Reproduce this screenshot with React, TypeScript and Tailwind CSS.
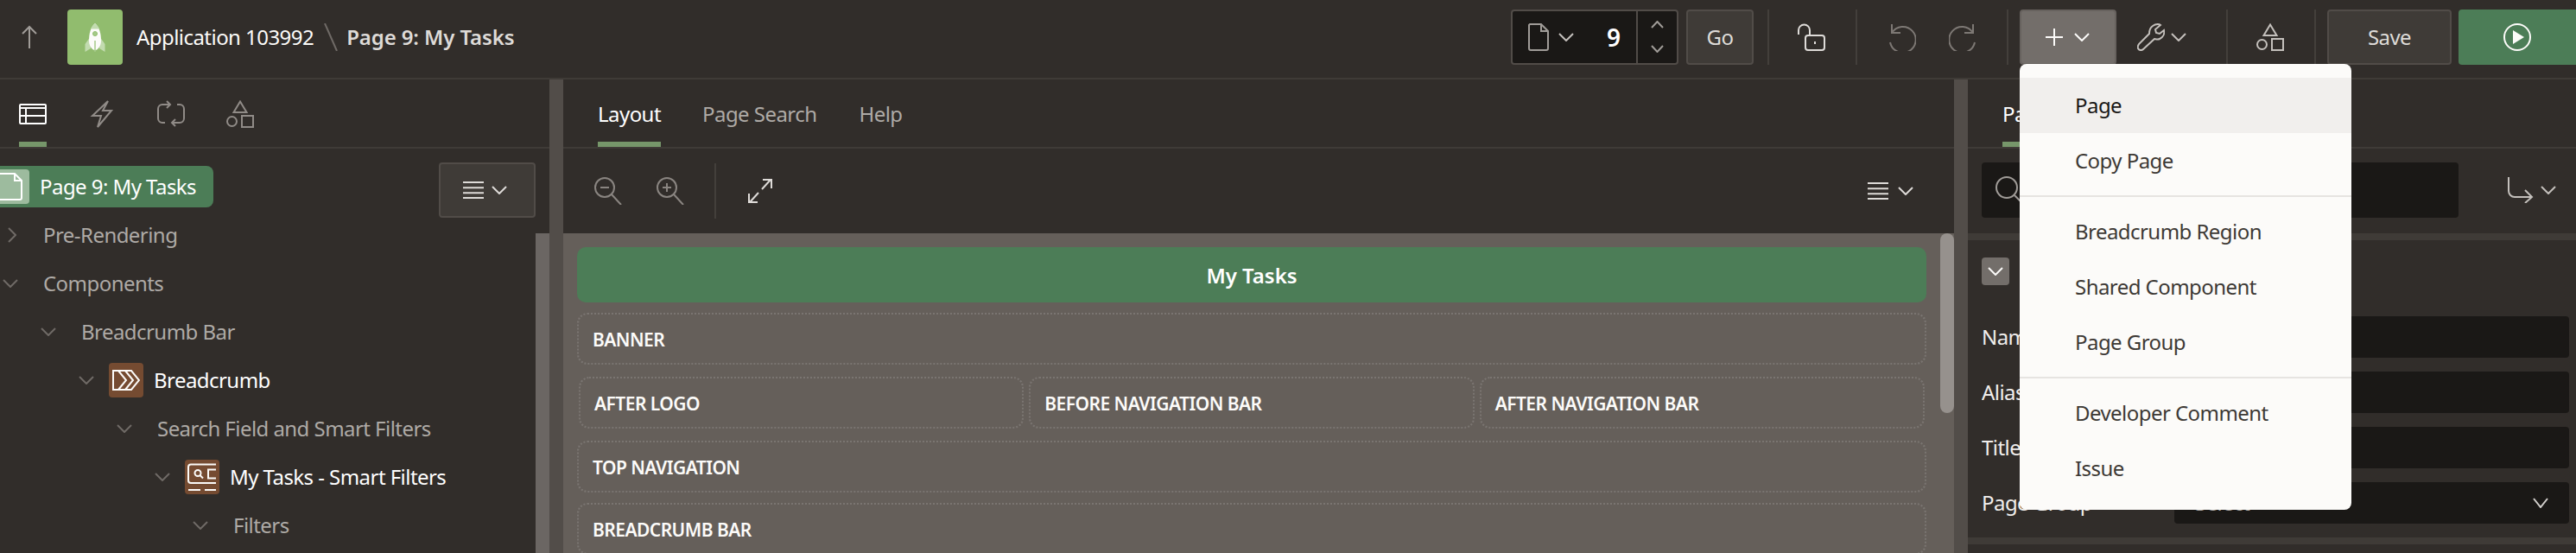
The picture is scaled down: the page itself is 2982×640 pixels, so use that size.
import React from "react";

const S = ({ w, h, vb, className = "", children }: { w: number; h: number; vb?: string; className?: string; children: React.ReactNode }) => (
  <svg width={w} height={h} viewBox={vb ?? `0 0 ${w} ${h}`} fill="none" stroke="currentColor" strokeWidth={2} className={`shrink-0 ${className}`}>
    {children}
  </svg>
);

const Chev = ({ dir = "down", w = 18, h = 10, className = "" }: { dir?: "down" | "up" | "right"; w?: number; h?: number; className?: string }) => {
  if (dir === "right")
    return <S w={h} h={w} className={className}><path d={`M1 1 L${h - 1} ${w / 2} L1 ${w - 1}`} /></S>;
  if (dir === "up")
    return <S w={w} h={h} className={className}><path d={`M1 ${h - 1} L${w / 2} 1 L${w - 1} ${h - 1}`} /></S>;
  return <S w={w} h={h} className={className}><path d={`M1 1 L${w / 2} ${h - 1} L${w - 1} 1`} /></S>;
};

const Burger = () => (
  <S w={24} h={20}><path d="M0 1H24M0 7.3H24M0 13.3H24M0 19H24" /></S>
);

const Shapes = ({ className = "" }: { className?: string }) => (
  <S w={32} h={32} className={className}>
    <path d="M16 1.5 L23.5 14 H8.5 Z" />
    <circle cx="6.5" cy="24.5" r="5.5" />
    <rect x="18" y="18" width="13" height="13" />
  </S>
);

const Doc = ({ className = "" }: { className?: string }) => (
  <S w={24} h={32} className={className}>
    <path d="M2 1H15L23 9V29a2 2 0 0 1-2 2H3a2 2 0 0 1-2-2V2Z" />
    <path d="M15 1V9H23" />
  </S>
);

const Divider = ({ className = "" }: { className?: string }) => <div className={`w-[2px] h-[64px] bg-[#433f3b] shrink-0 ${className}`} />;

const Tab = ({ label, active = false, className = "" }: { label: string; active?: boolean; className?: string }) => (
  <div className={`h-full flex items-center relative whitespace-nowrap pt-[2px] ${active ? "text-white" : "text-[#aeaaa6]"} ${className}`}>
    {label}
    {active && <div className="absolute left-0 right-0 bottom-0 h-[6px] bg-[#76966a]" />}
  </div>
);

type Row = { label: string; level: number; icon?: "crumb" | "filter"; open?: boolean };
const rows: Row[] = [
  { label: "Pre-Rendering", level: 0, open: false },
  { label: "Components", level: 0 },
  { label: "Breadcrumb Bar", level: 1 },
  { label: "Breadcrumb", level: 2, icon: "crumb" },
  { label: "Search Field and Smart Filters", level: 3 },
  { label: "My Tasks - Smart Filters", level: 4, icon: "filter" },
  { label: "Filters", level: 5 },
];

const levelPad: Record<number, string> = { 0: "pl-[3px]", 1: "pl-[47px]", 2: "pl-[91px]", 3: "pl-[135px]", 4: "pl-[179px]", 5: "pl-[223px]" };

const CrumbIcon = () => (
  <div className="w-[40px] h-[40px] rounded-[4px] bg-[#754b31] flex items-center justify-center text-[#fcfbf9]">
    <S w={32} h={24}>
      <path d="M22 1 H1 V23 H22 L31 12 Z" />
      <path d="M7 1 L16 12 L7 23" />
      <path d="M15 1 L24 12 L15 23" />
    </S>
  </div>
);

const FilterIcon = () => (
  <div className="w-[40px] h-[40px] rounded-[4px] bg-[#754b31] text-[#fcfbf9]">
    <S w={40} h={40}>
      <path d="M36 5.5H7a3 3 0 0 0-3 3V24a3 3 0 0 0 3 3H36" />
      <circle cx="15" cy="15.5" r="3.5" />
      <path d="M17.5 18 L21 21.5" />
      <path d="M36 11.5H27V21.5H36" />
      <path d="M4 35H18M23 35H36" />
    </S>
  </div>
);

const DotBox = ({ label, className = "" }: { label: string; className?: string }) => (
  <div className={`h-[60px] border-2 border-dotted border-[#7a7571] rounded-[12px] flex items-center pl-[16px] pt-[4px] text-[21px] font-semibold text-[#fcfbf9] whitespace-nowrap ${className}`}>
    {label}
  </div>
);

const Field = ({ label, select = false }: { label: string; select?: boolean }) => (
  <div className="h-[48px] flex items-center mb-[16px]">
    <div className="w-[223px] text-[#f0eeec] whitespace-nowrap overflow-hidden">{label}</div>
    <div className="w-[457px] h-[48px] bg-[#1a1816] rounded-[4px] flex items-center justify-between pl-[24px] pr-[24px] text-[#aeaaa6]">
      {select && <span>Select</span>}
      {select && <Chev w={18} h={12} className="text-[#d4d1ce]" />}
    </div>
  </div>
);

const menuGroups = [["Page", "Copy Page"], ["Breadcrumb Region", "Shared Component", "Page Group"], ["Developer Comment", "Issue"]];

export default function App() {
  return (
    <div className="w-[2982px] h-[640px] overflow-hidden relative bg-[#312d2a] text-[#fcfbf9] text-[24px] tracking-[-0.55px] font-['Noto_Sans',sans-serif]">
      {/* Top bar */}
      <div className="h-[92px] border-b-2 border-[#3f3b37] flex items-center pl-[25px] pb-[5px]">
        <S w={18} h={28} className="text-[#a09c98]"><path d="M9 27V2M1 10L9 2L17 10" /></S>
        <div className="ml-[35px] w-[64px] h-[64px] rounded-[4px] bg-[#91bc6e] shrink-0">
          <svg width="64" height="64" viewBox="0 0 64 64" className="shrink-0">
            <path d="M25.5 33 L20.5 40 V49 L27 45 Z M38.5 33 L43.5 40 V49 L37 45 Z" fill="#c2dbaf" />
            <path d="M32 16 C27 20 25 28 25 36 C25 42 28 46 32 47.5 C36 46 39 42 39 36 C39 28 37 20 32 16Z" fill="#fcfbf9" />
            <path d="M32 16 C30 18 28 20 27 22.5 H37 C36 20 34 18 32 16Z" fill="#c2dbaf" />
            <circle cx="32" cy="28" r="2.5" fill="#a5ca88" stroke="#91bc6e" strokeWidth="1" />
            <path d="M32 36V49" stroke="#a5ca88" strokeWidth="1.5" />
          </svg>
        </div>
        <div className="ml-[16px] whitespace-nowrap">Application 103992</div>
        <S w={16} h={32} className="ml-[12px] text-[#6f6a66]"><path d="M1 0L15 32" /></S>
        <div className="ml-[10px] whitespace-nowrap font-semibold text-[#dedbd8] tracking-[-0.1px]">Page 9: My Tasks</div>
        <div className="flex-1" />
        <div className="w-[194px] h-[64px] bg-[#1a1816] border-2 border-[#514c48] rounded-[4px] flex items-center shrink-0">
          <Doc className="ml-[18px] text-[#a09c98]" />
          <Chev className="ml-[11px] text-[#c4c0bc]" />
          <div className="ml-[38px] w-[20px] font-semibold text-white text-[28px]">9</div>
          <div className="ml-[15px] h-full w-[48px] border-l-2 border-[#514c48] flex flex-col items-center justify-center gap-[19px] text-[#a09c98]">
            <Chev dir="up" w={15} h={9} />
            <Chev w={15} h={9} />
          </div>
        </div>
        <div className="ml-[9px] w-[78px] h-[64px] bg-[#3f3b37] border-2 border-[#514c48] rounded-[4px] flex items-center justify-center text-[#dedbd8] shrink-0">Go</div>
        <Divider className="ml-[16px]" />
        <S w={32} h={32} className="ml-[33px] text-[#dedbd8]">
          <rect x="9" y="14" width="22" height="17" rx="3" />
          <path d="M1 13V8a6.5 6.5 0 0 1 13 0V14" />
          <path d="M20 21V24" />
        </S>
        <Divider className="ml-[35px]" />
        <S w={32} h={32} className="ml-[36px] text-[#7d7874]">
          <path d="M4 1V11H14" />
          <path d="M4 11A15 15 0 1 1 2 22" />
        </S>
        <S w={32} h={32} className="ml-[38px] text-[#7d7874]">
          <path d="M28 1V11H18" />
          <path d="M28 11A15 15 0 1 0 30 22" />
        </S>
        <Divider className="ml-[35px]" />
        <div className="ml-[13px] w-[112px] h-[64px] bg-[#736e6a] rounded-[4px] border-2 border-[#67625e] flex items-center pl-[28px] shrink-0">
          <S w={20} h={20} className="text-[#fcfbf9]"><path d="M10 0V20M0 10H20" /></S>
          <Chev className="ml-[13px] text-[#fcfbf9]" />
        </div>
        <S w={32} h={32} className="ml-[24px] text-[#c4c0bc]">
          <path d="M18 3 C22 0 26 1 27 2 L21 7 L22 11 L26 12 L31 8 C32 12 30 16 26 18 C24 19 21 18 20 18 L7 30 C5 32 2 31 1 29 C0 27 1 26 2 24 L14 12 C14 9 15 5 18 3Z" />
        </S>
        <Chev className="ml-[7px] text-[#c4c0bc]" />
        <Divider className="ml-[46px]" />
        <Shapes className="ml-[33px] text-[#c4c0bc]" />
        <Divider className="ml-[35px]" />
        <div className="ml-[13px] w-[144px] h-[64px] bg-[#3f3b37] border-2 border-[#514c48] rounded-[4px] flex items-center justify-center text-[#dedbd8] shrink-0">Save</div>
        <div className="ml-[8px] w-[136px] h-[64px] bg-[#4c7d57] rounded-l-[4px] flex items-center justify-center shrink-0">
          <S w={32} h={32} className="text-[#fcfbf9]">
            <circle cx="16" cy="16" r="15" />
            <path d="M11 8 L24 16 L11 24 Z" fill="currentColor" stroke="none" />
          </S>
        </div>
      </div>

      {/* Body */}
      <div className="flex h-[548px]">
        {/* Left */}
        <div className="w-[636px] flex flex-col shrink-0">
          <div className="h-[80px] border-b-2 border-[#3f3b37] relative flex items-center pl-[22px] gap-[48px] text-[#908b87] pt-[2px]">
            <S w={32} h={24} className="text-white">
              <rect x="1" y="1" width="30" height="22" rx="1" />
              <path d="M1 5H31M1 14H31M8 5V23" />
            </S>
            <S w={32} h={32}><path d="M23 1 L5 18 H15 L11 31 L27 12 H17 Z" /></S>
            <S w={32} h={32}>
              <path d="M14 5H6a5 5 0 0 0-5 5V21a5 5 0 0 0 5 5H9" />
              <path d="M18 26H26a5 5 0 0 0 5-5V10a5 5 0 0 0-5-5H23" />
              <path d="M11 1L15 5L11 9" />
              <path d="M21 22L17 26L21 30" />
            </S>
            <Shapes />
            <div className="absolute left-[22px] bottom-0 w-[32px] h-[6px] bg-[#76966a]" />
          </div>
          <div className="flex-1 flex min-h-0">
            <div className="flex-1 pt-[16px] relative">
              <div className="h-[56px] flex items-center">
                <div className="h-[48px] w-[247px] rounded-r-[8px] bg-[#4c7d57] flex items-center text-white">
                  <div className="w-[34px] h-[40px] bg-[#9dbb9e] rounded-r-[4px] flex items-center justify-end pr-[8px] text-white">
                    <svg width="26" height="32" viewBox="0 0 26 32" fill="none" stroke="currentColor" strokeWidth="2" className="shrink-0"><path d="M0 1H17L25 9V29a2 2 0 0 1-2 2H0" /><path d="M17 1V9H25" /></svg>
                  </div>
                  <span className="ml-[12px] whitespace-nowrap">Page 9: My Tasks</span>
                </div>
              </div>
              {rows.map((r) => (
                <div key={r.label} className={`h-[56px] flex items-center whitespace-nowrap ${levelPad[r.level]}`}>
                  {r.open === false ? (
                    <Chev dir="right" w={18} h={10} className="ml-[6px] mr-[6px] text-[#6f6a66]" />
                  ) : (
                    <Chev className="text-[#6f6a66]" w={18} h={10} />
                  )}
                  {r.icon ? (
                    <div className="ml-[17px] flex items-center gap-[12px] text-white">
                      {r.icon === "crumb" ? <CrumbIcon /> : <FilterIcon />}
                      <span>{r.label}</span>
                    </div>
                  ) : (
                    <span className={`${r.open === false ? "ml-[25px]" : "ml-[29px]"} text-[#aeaaa6]`}>{r.label}</span>
                  )}
                </div>
              ))}
              <div className="absolute right-0 top-[16px] w-[112px] h-[64px] bg-[#3f3b37] border-2 border-[#514c48] rounded-[4px] flex items-center pl-[26px] gap-[9px] text-[#dedbd8]">
                <Burger />
                <Chev />
              </div>
            </div>
            <div className="w-[16px] mt-[98px] bg-[#6b6663] shrink-0" />
          </div>
        </div>
        <div className="w-[16px] bg-[#524d49] shrink-0" />

        {/* Center */}
        <div className="w-[1610px] flex flex-col shrink-0">
          <div className="h-[80px] border-b-2 border-[#3f3b37] flex pl-[40px] shrink-0">
            <Tab label="Layout" active />
            <Tab label="Page Search" className="ml-[48px]" />
            <Tab label="Help" className="ml-[49px]" />
          </div>
          <div className="h-[98px] flex items-center pl-[36px] pr-[47px] shrink-0">
            <S w={32} h={32} className="text-[#8a8581]">
              <circle cx="12" cy="12" r="11" />
              <path d="M20 20L31 32M7 12H17" />
            </S>
            <S w={32} h={32} className="ml-[40px] text-[#8a8581]">
              <circle cx="12" cy="12" r="11" />
              <path d="M20 20L31 32M7 12H17M12 7V17" />
            </S>
            <Divider className="ml-[35px]" />
            <S w={28} h={30} className="ml-[37px] text-[#dedbd8]">
              <path d="M16 13L26 2M17 2H27V12" />
              <path d="M12 17L2 28M1 18V28H11" />
            </S>
            <div className="flex-1" />
            <div className="flex items-center gap-[11px] text-[#dedbd8]">
              <Burger />
              <Chev />
            </div>
          </div>
          <div className="flex-1 bg-[#655f5a] relative pt-[16px] pl-[16px] pr-[32px] overflow-hidden flex flex-col">
            <div className="h-[64px] bg-[#4c7d57] rounded-[10px] flex items-center justify-center font-semibold text-white mb-[12px] shrink-0 pt-[2px] tracking-[0px]">My Tasks</div>
            <DotBox label="BANNER" className="mb-[14px] shrink-0" />
            <div className="flex gap-[6px] px-[2px] mb-[14px] shrink-0">
              <DotBox label="AFTER LOGO" className="flex-1" />
              <DotBox label="BEFORE NAVIGATION BAR" className="flex-1" />
              <DotBox label="AFTER NAVIGATION BAR" className="flex-1" />
            </div>
            <DotBox label="TOP NAVIGATION" className="mb-[12px] shrink-0" />
            <DotBox label="BREADCRUMB BAR" className="shrink-0" />
            <div className="absolute right-0 top-0 w-[16px] h-[208px] bg-[#96918d] rounded-[8px]" />
          </div>
        </div>
        <div className="w-[16px] bg-[#524d49] shrink-0" />

        {/* Right */}
        <div className="flex-1 flex flex-col min-w-0">
          <div className="h-[80px] border-b-2 border-[#3f3b37] flex pl-[40px] shrink-0">
            <Tab label="Page" active />
          </div>
          <div className="h-[98px] flex items-center pl-[16px] pb-[2px] shrink-0">
            <div className="w-[552px] h-[64px] bg-[#1a1816] rounded-[4px] flex items-center pl-[16px] text-[#a09c98]">
              <S w={32} h={32}><circle cx="13" cy="13" r="12" /><path d="M22 22L31 31" /></S>
            </div>
            <S w={30} h={30} className="ml-[57px] text-[#c4c0bc]">
              <path d="M1 0V16a7 7 0 0 0 7 7H28M20 15L28 23L20 30" />
            </S>
            <Chev className="ml-[8px] text-[#c4c0bc]" />
          </div>
          <div className="h-[8px] bg-[#3f3b37] shrink-0" />
          <div className="h-[344px] pt-[20px] shrink-0">
            <div className="ml-[16px] w-[32px] h-[32px] rounded-[4px] bg-[#736e6a] flex items-center justify-center text-[#fcfbf9]">
              <Chev w={18} h={10} />
            </div>
            <div className="mt-[36px] pl-[16px]">
              <Field label="Name" />
              <Field label="Alias" />
              <Field label="Title" />
              <Field label="Page Group" select />
            </div>
          </div>
          <div className="h-[8px] bg-[#3f3b37] shrink-0" />
        </div>
      </div>

      {/* Create menu */}
      <div className="absolute left-[2338px] top-[74px] w-[384px] h-[516px] bg-[#fcfbf9] rounded-[8px] pt-[16px] text-[#3d3935]">
        {menuGroups.map((g, i) => (
          <div key={i} className={i < 2 ? "border-b-2 border-[#e6e4e1] pb-[8px] mb-[8px]" : ""}>
            {g.map((m) => (
              <div key={m} className={`h-[64px] flex items-center pl-[64px] whitespace-nowrap ${m === "Page" ? "bg-[#f1efed] text-[#1a1816]" : ""}`}>{m}</div>
            ))}
          </div>
        ))}
      </div>
    </div>
  );
}
